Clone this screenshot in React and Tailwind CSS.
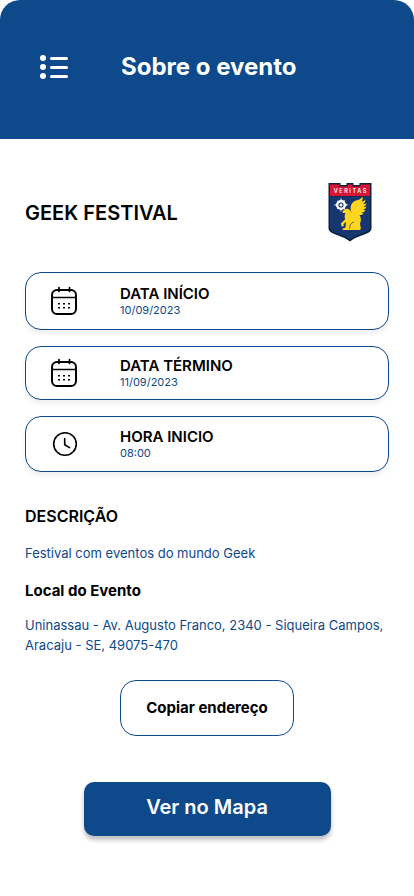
function MenuIcon() {
  return (
    <svg width="30" height="26" viewBox="0 0 30 26" fill="none" aria-hidden="true">
      <g fill="#fff">
        <circle cx="3" cy="4" r="3" />
        <circle cx="3" cy="13" r="3" />
        <circle cx="3" cy="22" r="3" />
      </g>
      <path d="M11.5 4.5h15M11.5 13.5h15M11.5 22.5h15" stroke="#fff" strokeWidth="3" strokeLinecap="round" />
    </svg>
  );
}

function CalendarIcon() {
  return (
    <svg width="28" height="30" viewBox="0 0 28 30" fill="none" stroke="#000" strokeWidth="2" strokeLinecap="round" aria-hidden="true">
      <rect x="2" y="4" width="24" height="24" rx="5" />
      <path d="M2 11.500h24" strokeWidth="1.700" />
      <path d="M9 1.500v4M19.500 1.500v4" strokeWidth="1.700" />
      <g fill="#000" stroke="none">
        <rect x="8" y="17" width="2" height="1.500" />
        <rect x="13" y="17" width="2" height="1.500" />
        <rect x="18" y="17" width="2" height="1.500" />
        <rect x="8" y="21" width="2" height="1.500" />
        <rect x="13" y="21" width="2" height="1.500" />
        <rect x="18" y="21" width="2" height="1.500" />
      </g>
    </svg>
  );
}

function ClockIcon() {
  return (
    <svg width="28" height="28" viewBox="0 0 28 28" fill="none" stroke="#000" strokeWidth="1.6" strokeLinecap="round" strokeLinejoin="round" aria-hidden="true">
      <circle cx="15" cy="14" r="11.300" />
      <path d="M14.700 8.500v6.300l4.800 2.800" />
    </svg>
  );
}

function Crest() {
  return (
    <svg width="44" height="60" viewBox="0 0 44 60" role="img" aria-label="Veritas">
      <path d="M.5 0h12v2h6V0h7v2h6V0h12v45c0 7-12 6-21.500 13.500C12.500 51 .5 52 .5 45z" fill="#0c2340" />
      <path d="M2 1.500h9.500v2h8v-2h5v2h8v-2H42V13H2z" fill="#dc1436" />
      <path d="M2 13.500h40V44c0 6.500-11 5.500-20 12.500C13 49.500 2 50.500 2 44z" fill="#17366f" />
      <text x="22.800" y="10" fill="#fff" fontSize="5.500" fontWeight="600" textAnchor="middle" fontFamily="Inter, sans-serif" letterSpacing="1.600">VERITAS</text>
      <path d="M13 14.500l1 3.600 3-1.200-1.200 3L20.500 22l-4.700 1.300 1.200 3-3-1.200-1 4.400-1-4.400-3 1.200 1.200-3L5.500 22l4.700-1.400-1.200-3 3 1.200z" fill="#fff" />
      <circle cx="13" cy="22" r="5" fill="#fff" />
      <circle cx="13" cy="22" r="2.600" fill="#17366f" />
      <circle cx="13" cy="22" r="1.500" fill="#fff" />
      <path d="M24 30c-3-5-1-11 4-12.500 3-.8 5-1.500 6.500-4 .5 2 0 4-1 5 2-.2 3-.8 4-2-.1 2-1 3.600-2.500 4.500 1.600.2 2.600-.2 3.600-1-.5 2-1.600 3.200-3.200 3.800 1.300.4 2.300.2 3.200-.3-.7 2-2 3-3.700 3.300.9.500 1.900.6 2.700.3-1 1.800-2.400 2.500-4 2.500.6.600 1.300.8 2 .8-1.200 1.400-2.600 1.800-4.200 1.600 1.800 2.600 2 5.600.6 8.500l.5 3.200c.8 1.300.3 3.300-1.500 3.300H14.500c0-1.500 1-2.200 3-2.200l.5-6-2.800 2.600 1.200 1.600-2.900.6-.6-3 4.300-4.300c-.8-2.200-.7-4.600.2-6.300l-2.800-.1c-.1-2.600 1.900-4.300 4.500-4.100 2.400.2 3.700 2.500 4.900 4.200z" fill="#ffd51f" />
      <path d="M21.500 46c0-4 1.500-6 4.500-7" fill="none" stroke="#17366f" strokeWidth=".7" />
    </svg>
  );
}

const details = [
  { label: "DATA INÍCIO", value: "10/09/2023", Icon: CalendarIcon, height: "h-[58px]" },
  { label: "DATA TÉRMINO", value: "11/09/2023", Icon: CalendarIcon, height: "h-[54px]" },
  { label: "HORA INICIO", value: "08:00", Icon: ClockIcon, height: "h-14" },
];

export default function App() {
  return (
    <div className="min-h-screen bg-white font-[Inter,sans-serif] text-black">
      <header className="flex items-center rounded-t-[20px] bg-[#0d498b] px-10 pt-12 pb-[53px]">
        <button type="button" aria-label="Abrir menu" className="mr-[51px]">
          <MenuIcon />
        </button>
        <h1 className="text-2xl leading-[38px] font-bold text-white">Sobre o evento</h1>
      </header>

      <main className="px-[25px] pt-11 pb-10">
        <div className="flex items-center justify-between pr-[17px]">
          <h2 className="text-xl font-semibold">GEEK FESTIVAL</h2>
          <Crest />
        </div>

        <dl className="mt-[29px] flex flex-col gap-4">
          {details.map(({ label, value, Icon, height }) => (
            <div key={label} className={`flex items-center rounded-2xl border border-[#0d498b] bg-white shadow-[0_4px_4px_rgba(0,0,0,0.06)] ${height}`}>
              <div className="flex w-[94px] shrink-0 pl-6">
                <Icon />
              </div>
              <div>
                <dt className="text-[15px] leading-[18px] font-semibold">{label}</dt>
                <dd className="text-[11px] leading-[14px] text-[#0d498b]">{value}</dd>
              </div>
            </div>
          ))}
        </dl>

        <h3 className="mt-[34px] text-base leading-5 font-semibold">DESCRIÇÃO</h3>
        <p className="mt-[17px] text-[13px] leading-5 text-[#0d498b]">Festival com eventos do mundo Geek</p>
        <h3 className="mt-[18px] text-[15px] leading-5 font-bold">Local do Evento</h3>
        <p className="mt-[14px] text-[13px] leading-5 text-[#0d498b]">
          Uninassau - Av. Augusto Franco, 2340 - Siqueira Campos, Aracaju - SE, 49075-470
        </p>

        <div className="mt-[25px] flex flex-col items-center gap-[46px]">
          <button type="button" className="h-14 w-[174px] rounded-2xl border border-[#0d498b] text-[15px] font-bold">
            Copiar endereço
          </button>
          <button type="button" className="h-[54px] w-[247px] rounded-[10px] bg-[#0d498b] pb-1 text-xl font-semibold text-white shadow-[0_4px_4px_rgba(0,0,0,0.25)]">
            Ver no Mapa
          </button>
        </div>
      </main>
    </div>
  );
}
